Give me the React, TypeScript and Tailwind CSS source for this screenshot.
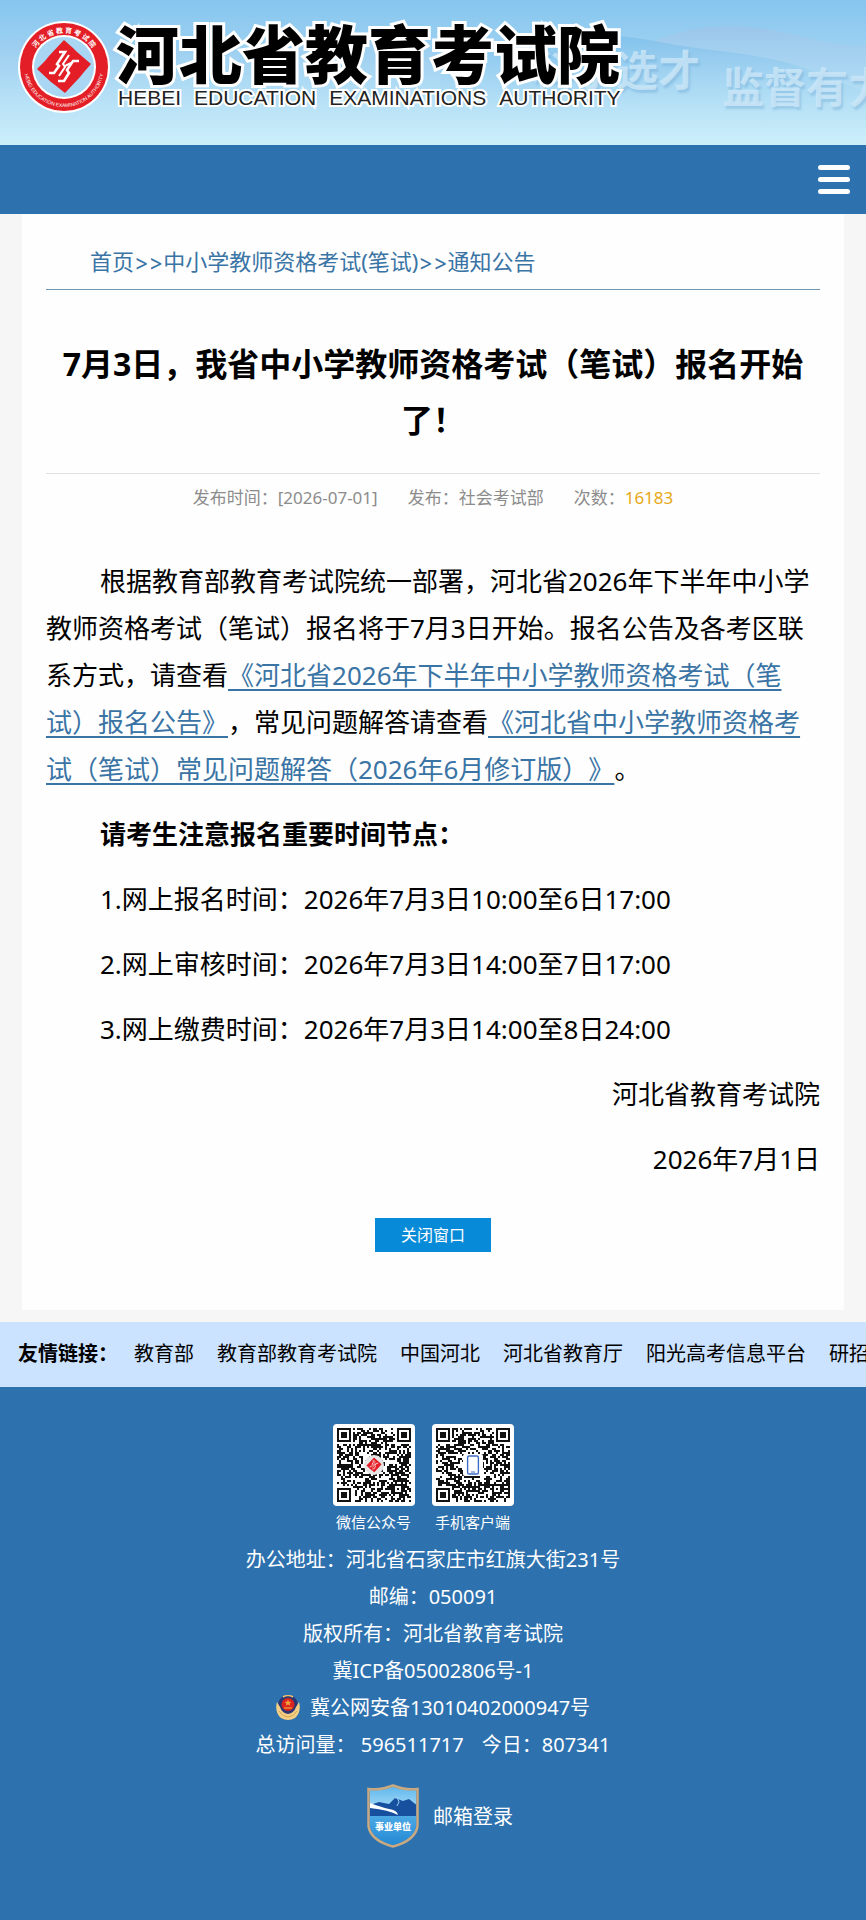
const links = [
  "教育部",
  "教育部教育考试院",
  "中国河北",
  "河北省教育厅",
  "阳光高考信息平台",
  "研招网",
];

const schedule = [
  "1.网上报名时间：2026年7月3日10:00至6日17:00",
  "2.网上审核时间：2026年7月3日14:00至7日17:00",
  "3.网上缴费时间：2026年7月3日14:00至8日24:00",
];

// Version 5 QR layout: 37 x 37 modules
const QR_SIZE = 37;

function buildModules(seed: number) {
  let s = seed;
  let d = "";
  const finder = (x: number, y: number) => {
    if (x > 7 || y > 7) return null;
    if (x === 7 || y === 7) return false;
    const r = Math.max(Math.abs(x - 3), Math.abs(y - 3));
    return r !== 2;
  };
  for (let y = 0; y < QR_SIZE; y++) {
    for (let x = 0; x < QR_SIZE; x++) {
      s = (s * 1103515245 + 12345) % 2147483648;
      let on = s / 2147483648 > 0.46;
      const mark =
        finder(x, y) ?? finder(QR_SIZE - 1 - x, y) ?? finder(x, QR_SIZE - 1 - y);
      const align = Math.max(Math.abs(x - 30), Math.abs(y - 30));
      if (mark !== null) on = mark;
      else if (align <= 2) on = align !== 1;
      if (on) d += `M${x + 2} ${y + 2}h1v1h-1z`;
    }
  }
  return d;
}

function EmblemMark() {
  return (
    <>
      <path
        d="M0 -27 L9 -19 L13 -15 L27 -3 L20 5 L16 10 L1 26 L-9 18 L-13 15 L-27 2 L-19 -6 L-15 -11 Z"
        fill="#e31e26"
      />
      <path
        d="M-5 -15 L1 -15 L-7 -3 L-5 -1 L-10 6 L-15 6 M15 -6 L9 -6 L3 3 L5 6 L0 14 L-6 14"
        fill="none"
        stroke="#fff"
        strokeWidth="2.6"
      />
      <path d="M5 -12 L-1 -3 L1 0 L-5 9 M1 -1 L7 -4" fill="none" stroke="#fff" strokeWidth="2" />
    </>
  );
}

function Logo() {
  return (
    <svg viewBox="-46 -46 92 92" className="size-[92px] shrink-0" aria-label="河北省教育考试院">
      <defs>
        <path id="arc-top" d="M-34 0 A34 34 0 0 1 34 0" />
        <path id="arc-bottom" d="M-40 0 A40 40 0 0 0 40 0" />
      </defs>
      <circle r="46" fill="#fff" />
      <circle r="44" fill="#e31e26" />
      <circle r="32" fill="#fff" />
      <circle r="30" fill="#a9d7f3" />
      <text fill="#fff" fontSize="7" fontWeight="700" fontFamily="Noto Sans CJK SC, sans-serif" textAnchor="middle">
        <textPath href="#arc-top" startOffset="50%">
          河 北 省 教 育 考 试 院
        </textPath>
      </text>
      <text fill="#fff" fontSize="5" fontFamily="Liberation Sans, sans-serif" textAnchor="middle">
        <textPath href="#arc-bottom" startOffset="50%">
          HEBEI EDUCATION EXAMINATION AUTHORITY
        </textPath>
      </text>
      <EmblemMark />
    </svg>
  );
}

function HeaderArt() {
  return (
    <svg viewBox="0 0 866 145" preserveAspectRatio="none" className="absolute inset-0 size-full" aria-hidden="true">
      <defs>
        <linearGradient id="sky" x1="0" y1="0" x2="0" y2="1">
          <stop offset="0" stopColor="#86c5ee" />
          <stop offset="0.45" stopColor="#a4d5f3" />
          <stop offset="1" stopColor="#cdeffa" />
        </linearGradient>
        <linearGradient id="ridge" x1="0" y1="0" x2="0" y2="1">
          <stop offset="0" stopColor="#7dbfeb" stopOpacity="0.8" />
          <stop offset="1" stopColor="#bfe7f8" stopOpacity="0" />
        </linearGradient>
        <linearGradient id="haze" x1="0" y1="0" x2="0" y2="1">
          <stop offset="0" stopColor="#9fc3e8" stopOpacity="0.7" />
          <stop offset="1" stopColor="#c5e8f8" stopOpacity="0" />
        </linearGradient>
      </defs>
      <rect width="866" height="145" fill="url(#sky)" />
      <path d="M640 48 C690 22 740 22 790 34 S850 46 866 46 V110 H640 Z" fill="url(#haze)" />
      <path d="M440 60 C520 32 600 30 660 42 S760 50 820 74 L866 92 V135 H440 Z" fill="url(#ridge)" />
      <path d="M0 40 C90 30 180 60 300 46 S420 60 470 52 V120 H0 Z" fill="url(#haze)" opacity="0.35" />
    </svg>
  );
}

function QrCode({ seed, label, children }: { seed: number; label: string; children: React.ReactNode }) {
  return (
    <figure className="flex flex-col items-center">
      <svg viewBox="0 0 41 41" className="size-[82px] rounded bg-white" aria-hidden="true">
        <path d={buildModules(seed)} fill="#111" shapeRendering="crispEdges" />
        {children}
      </svg>
      <figcaption className="mt-1 text-[15px] leading-6">{label}</figcaption>
    </figure>
  );
}

function PoliceBadge() {
  return (
    <svg viewBox="0 0 24 26" className="h-[26px] w-6" aria-hidden="true">
      <circle cx="12" cy="10" r="10" fill="#2d3673" />
      <path d="M1 7 C-1 14 1 20 5 23 Q12 27 19 23 C23 20 25 14 23 7 L20 12 Q18 18 12 19 Q6 18 4 12 Z" fill="#f3cf85" />
      <path d="M3 16 Q7 22 12 22 Q17 22 21 16" fill="none" stroke="#d9a34c" strokeWidth="1" />
      <path d="M7 2 Q12 -1 17 2" fill="none" stroke="#e8bd6b" strokeWidth="1.6" />
      <circle cx="12" cy="9.5" r="6.5" fill="#d9251d" />
      <path d="M12 4.5 l1 2.2 2.3 .2 -1.7 1.5 .5 2.3 -2.1 -1.2 -2.1 1.2 .5 -2.3 -1.7 -1.5 2.3 -.2z" fill="#f5a13a" />
      <path d="M8 13 H16" stroke="#f5a13a" strokeWidth="1.2" />
    </svg>
  );
}

function InstitutionShield() {
  return (
    <svg viewBox="0 0 52 64" className="h-16 w-[52px]" aria-hidden="true">
      <defs>
        <linearGradient id="shield-sky" x1="0" y1="0" x2="0" y2="1">
          <stop offset="0" stopColor="#58b4ec" />
          <stop offset="1" stopColor="#b9e4fa" />
        </linearGradient>
        <linearGradient id="shield-sea" x1="0" y1="0" x2="0" y2="1">
          <stop offset="0" stopColor="#4eaae6" />
          <stop offset="1" stopColor="#1f86d2" />
        </linearGradient>
        <clipPath id="shield-clip">
          <path d="M26 3 C32 5 40 7 49 6 V42 C48 52 38 58 26 61 C14 58 4 52 3 42 V6 C12 7 20 5 26 3 Z" />
        </clipPath>
      </defs>
      <g clipPath="url(#shield-clip)">
        <rect width="52" height="32" fill="url(#shield-sky)" />
        <rect y="31" width="52" height="33" fill="url(#shield-sea)" />
        <path d="M0 22 L12 18 L22 20 L28 14 L36 17 L42 15 L52 23 V32 H0 Z" fill="#17509f" />
        <path d="M3 19 Q14 23 22 25 Q30 26 31 31 Q22 26 3 24 Z" fill="#fff" />
        <path d="M28 14 l2 -1 2 5 -2 4" fill="none" stroke="#9fd0f2" strokeWidth="1" />
      </g>
      <path
        d="M26 1.5 C32 4 41 6 50.5 5 V42 C49 53 39 59 26 62.5 C13 59 3 53 1.5 42 V5 C11 6 20 4 26 1.5 Z"
        fill="none"
        stroke="#c9a981"
        strokeWidth="2.5"
      />
      <text x="26" y="46" textAnchor="middle" fontSize="9" fontWeight="900" fill="#fff" fontFamily="Noto Sans CJK SC, sans-serif">
        事业单位
      </text>
    </svg>
  );
}

export default function App() {
  return (
    <div
      lang="zh-CN"
      className="flex min-h-screen flex-col overflow-x-hidden bg-[#f6f6f6] font-['Noto_Sans','Noto_Sans_CJK_SC',sans-serif] text-black [text-spacing-trim:space-all]"
    >
      {/* Banner */}
      <header className="relative h-[145px] overflow-hidden">
        <HeaderArt />
        <p className="absolute top-[42px] left-[532px] text-[42px] leading-[56px] font-bold whitespace-nowrap text-[#cfe8f8]/75 [text-shadow:2px_3px_2px_#6fa9d466]">
          科学选才
        </p>
        <p className="absolute top-[59px] left-[722px] text-[42px] leading-[56px] font-bold whitespace-nowrap text-[#cfe8f8]/75 [text-shadow:2px_3px_2px_#6fa9d466]">
          监督有力
        </p>
        <div className="relative flex gap-1.5 pt-[21px] pl-[18px]">
          <Logo />
          <div className="whitespace-nowrap">
            <h2 className="text-[63px] leading-[66px] font-black [-webkit-text-stroke:6px_white] [paint-order:stroke_fill]">
              河北省教育考试院
            </h2>
            <p className="flex gap-[13px] pl-0.5 font-['Liberation_Sans',sans-serif] text-[21px] leading-[22px] text-[#222] [-webkit-text-stroke:4px_white] [paint-order:stroke_fill]">
              <span>HEBEI</span>
              <span>EDUCATION</span>
              <span>EXAMINATIONS</span>
              <span>AUTHORITY</span>
            </p>
          </div>
        </div>
      </header>

      <nav className="flex h-[69px] items-center justify-end bg-[#2d72af] pr-4">
        <button type="button" aria-label="菜单" className="flex flex-col gap-[7px]">
          <span className="h-[5px] w-8 rounded-full bg-white" />
          <span className="h-[5px] w-8 rounded-full bg-white" />
          <span className="h-[5px] w-8 rounded-full bg-white" />
        </button>
      </nav>

      <main className="mx-[22px] bg-[#fefefe] px-6 pb-[58px]">
        <div className="border-b border-[#6f97b2] px-11 pt-[30px] pb-2.5 text-[22px] leading-[34px] text-[#3a74a5]">
          <a href="#">首页</a>
          <span className="font-['Inter',sans-serif]">&gt;&gt;</span>
          <a href="#">中小学教师资格考试(笔试)</a>
          <span className="font-['Inter',sans-serif]">&gt;&gt;</span>
          <a href="#">通知公告</a>
        </div>

        <h1 className="border-b border-[#e0e0e0] px-2 pt-[46px] pb-[25px] text-center text-[32px] leading-[56px] font-bold">
          7月3日，我省中小学教师资格考试（笔试）报名开始了！
        </h1>

        <div className="flex justify-center gap-[30px] pt-3 text-[17px] leading-6 text-[#8c8c8c]">
          <span>发布时间：[2026-07-01]</span>
          <span>发布：社会考试部</span>
          <span>
            次数：<span className="text-[#e6a817]">16183</span>
          </span>
        </div>

        <article className="mt-12 space-y-[18px] text-[26px] leading-[47px]">
          <p className="indent-[54px]">
            根据教育部教育考试院统一部署，河北省2026年下半年中小学教师资格考试（笔试）报名将于7月3日开始。报名公告及各考区联系方式，请查看
            <a href="#" className="text-[#3a74a5] underline decoration-2 underline-offset-4">
              《河北省2026年下半年中小学教师资格考试（笔试）报名公告》
            </a>
            ，常见问题解答请查看
            <a href="#" className="text-[#3a74a5] underline decoration-2 underline-offset-4">
              《河北省中小学教师资格考试（笔试）常见问题解答（2026年6月修订版）》
            </a>
            。
          </p>
          <p className="indent-[54px] font-bold">请考生注意报名重要时间节点：</p>
          {schedule.map((item) => (
            <p key={item} className="indent-[54px]">
              {item}
            </p>
          ))}
          <p className="text-right">河北省教育考试院</p>
          <p className="text-right">2026年7月1日</p>
        </article>

        <div className="mt-[35px] flex justify-center">
          <button type="button" className="h-[34px] bg-[#078bd8] px-[26px] text-[16px] text-white">
            关闭窗口
          </button>
        </div>
      </main>

      {/* Friendly links, scrolls off the right edge on narrow screens */}
      <div className="mt-3 flex h-[65px] items-center gap-4 overflow-hidden bg-[#cce3ff] pb-0.5 pl-[18px] text-[20px] whitespace-nowrap">
        <strong>友情链接：</strong>
        <ul className="flex gap-[23px]">
          {links.map((link) => (
            <li key={link}>
              <a href="#">{link}</a>
            </li>
          ))}
        </ul>
      </div>

      <footer className="flex grow flex-col items-center bg-[#2d72af] pt-[37px] text-[20px] leading-[37px] text-white">
        <div className="flex gap-[17px] pr-5">
          <QrCode seed={20517} label="微信公众号">
            <circle cx="20.5" cy="20.5" r="5" fill="#e6e6e6" />
            <g transform="translate(20.5 20.5) scale(0.14)">
              <EmblemMark />
            </g>
          </QrCode>
          <QrCode seed={88431} label="手机客户端">
            <rect x="15.5" y="15" width="10" height="11" rx="1" fill="#fff" />
            <rect x="17.8" y="16" width="5.4" height="9" rx="0.8" fill="#fff" stroke="#3e6cc4" strokeWidth="0.7" />
            <path d="M19.5 24 h2" stroke="#3e6cc4" strokeWidth="0.5" />
          </QrCode>
        </div>
        <p className="mt-[7px]">办公地址：河北省石家庄市红旗大街231号</p>
        <p>邮编：050091</p>
        <p>版权所有：河北省教育考试院</p>
        <a href="#">冀ICP备05002806号-1</a>
        <a href="#" className="flex items-center gap-2.5">
          <PoliceBadge />
          冀公网安备13010402000947号
        </a>
        <p className="flex gap-[18px]">
          <span>总访问量： 596511717</span>
          <span>今日：807341</span>
        </p>
        <a href="#" className="mt-[21px] flex items-center gap-3.5 pl-3.5">
          <InstitutionShield />
          邮箱登录
        </a>
      </footer>
    </div>
  );
}
